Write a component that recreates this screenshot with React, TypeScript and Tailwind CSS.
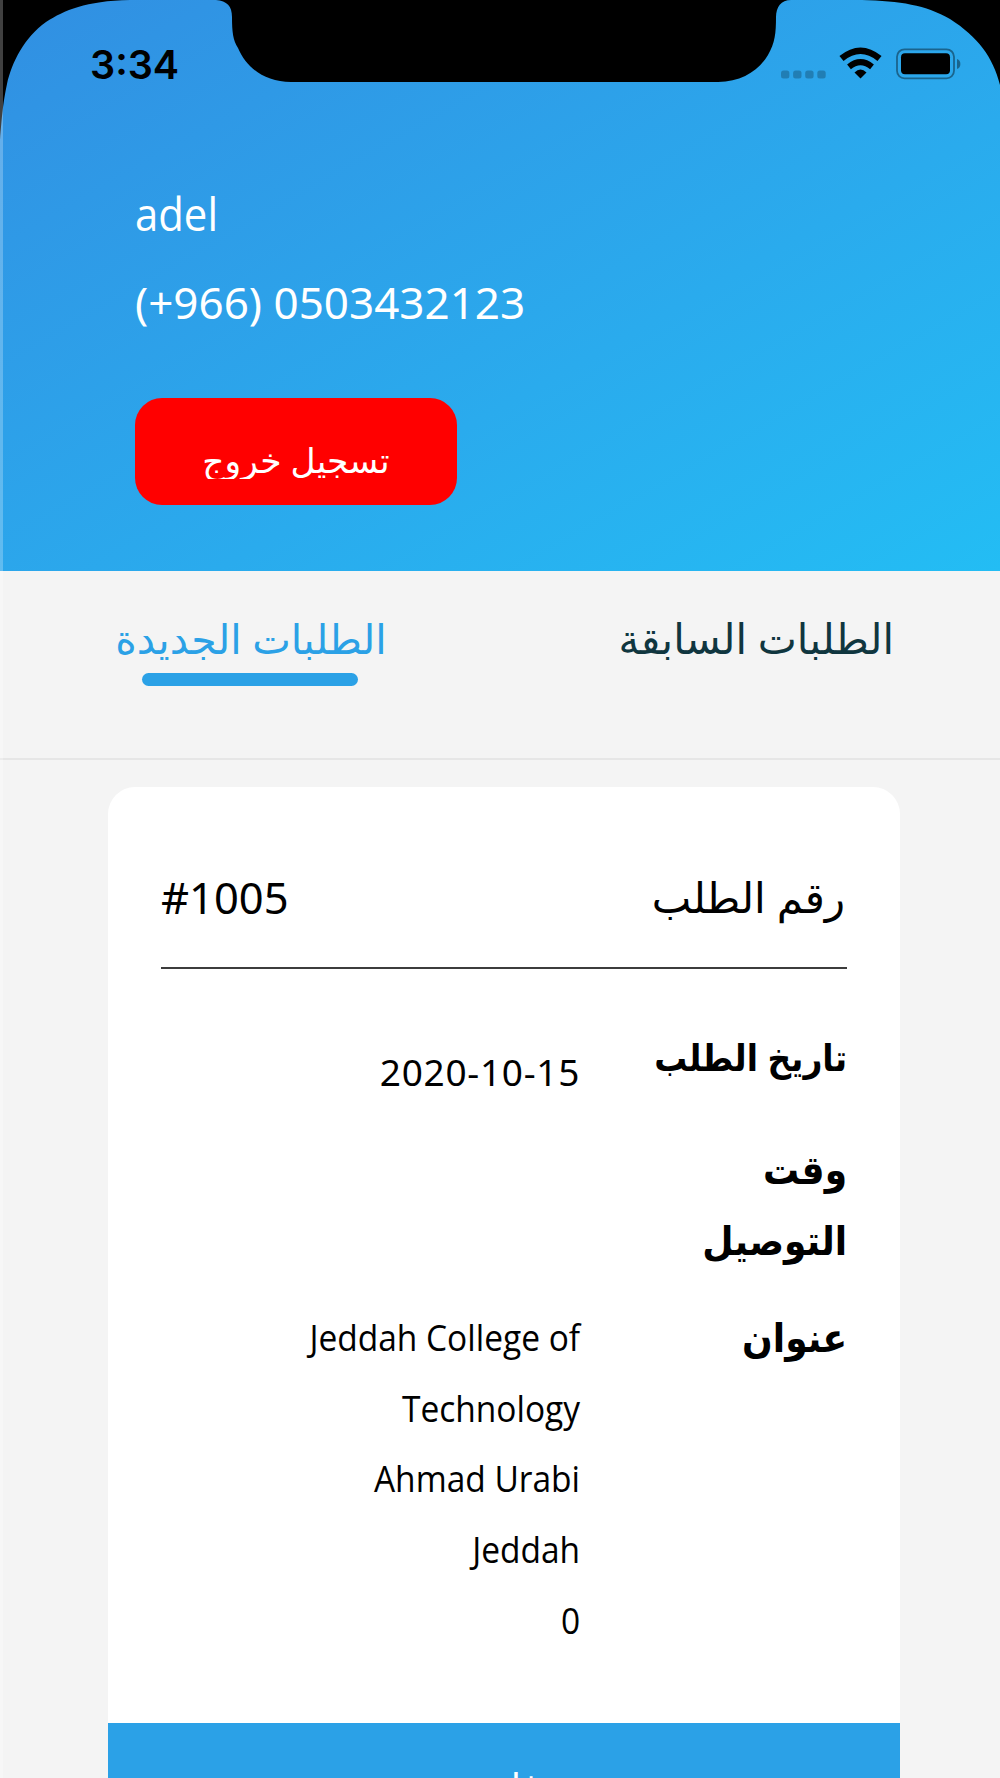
const order = {
  number: "#1005",
  date: "2020-10-15",
  address: ["Jeddah College of", "Technology", "Ahmad Urabi", "Jeddah", "0"],
};

export default function App() {
  return (
    <div className="relative flex h-[1778px] w-[1000px] flex-col overflow-hidden bg-[#f4f4f4] font-['Noto_Sans','DejaVu_Sans',sans-serif]">
      <Header />
      <Tabs />
      <OrderCard />
      {/* light seam along the left edge of the screen */}
      <div className="absolute left-0 top-0 h-full w-[3px] bg-white/25" />
    </div>
  );
}

// Blue profile header with the status bar on top
function Header() {
  return (
    <header className="relative h-[571px] shrink-0 bg-linear-to-br from-[#318fe2] to-[#23bdf4]">
      <Notch />
      <StatusBar />
      <div className="flex flex-col items-start pl-[135px] pt-[40px] text-white">
        <p className="origin-left scale-x-91 font-['Open_Sans'] text-[46px] leading-[88px]">adel</p>
        <p className="pt-px text-[44px] leading-[88px]">(+966) 0503432123</p>
        <button className="mt-[52px] flex h-[107px] w-[322px] justify-center rounded-[27px] bg-[#ff0000] pt-[43px]">
          <span dir="rtl" className="h-[38px] overflow-hidden text-[34.5px] leading-[37px]">
            تسجيل خروج
          </span>
        </button>
      </div>
    </header>
  );
}

// Black phone bezel: rounded corners and the sensor notch
function Notch() {
  return (
    <svg className="absolute left-0 top-0" width="1000" height="140" viewBox="0 0 1000 140">
      <path d="M0 0H130C85 1 65 10 46 22C24 38 12 62 7 84C3 103 2 115 0 140Z" />
      <path d="M216 0C227 1 232 6 232 17C232 32 233 40 238 48C246 67 264 82 291 82H718C742 82 759 70 768 55C775 43 776 33 776 17C776 7 781 0 791 0Z" />
      <path d="M862 0C900 1 926 5 950 19C978 37 993 57 1000 85V0Z" />
    </svg>
  );
}

function StatusBar() {
  return (
    <div className="relative flex h-[129px] items-center justify-between pl-[90px] pr-[38px]">
      <span className="pt-0.5 font-['Inter'] text-[39.5px] font-semibold leading-none">3:34</span>
      <svg width="182" height="37" viewBox="780 46 182 37">
        {[781, 793.1, 805.2, 817.3].map((x) => (
          <rect key={x} x={x} y="70.5" width="8.4" height="8" rx="2.5" fillOpacity="0.23" />
        ))}
        <path d="M841.5 58.5Q860.5 43 879.5 58.5" fill="none" stroke="#000" strokeWidth="6.5" />
        <path d="M849 66.8Q860.5 57.5 872 66.8" fill="none" stroke="#000" strokeWidth="6" />
        <path d="M860.5 78.5L854.5 72.5Q860.5 66.5 866.5 72.5Z" />
        <rect x="897" y="49.3" width="57" height="29" rx="7.5" fill="none" stroke="#000" strokeOpacity="0.4" strokeWidth="1.8" />
        <rect x="901" y="53.3" width="49" height="21" rx="4" />
        <path d="M957 59C961.5 60 961.5 68 957 69Z" fillOpacity="0.4" />
      </svg>
    </div>
  );
}

function Tabs() {
  return (
    <nav className="grid h-[189px] shrink-0 grid-cols-2 border-b-2 border-[#e6e6e6] pt-[37px] text-[41px] leading-[60px]">
      <div className="flex flex-col items-center text-[#2ba1e6]">
        <span dir="rtl" className="pl-0.5">الطلبات الجديدة</span>
        <div className="mt-[5px] h-[13px] w-[216px] rounded-full bg-[#2ba1e6]" />
      </div>
      <div dir="rtl" className="pr-[106px] text-[41.5px] text-[#10363f]">الطلبات السابقة</div>
    </nav>
  );
}

function OrderCard() {
  return (
    <main className="mx-[108px] mt-[27px] flex h-[1100px] w-[792px] shrink-0 flex-col rounded-t-[27px] bg-white text-black">
      <div className="mx-[53px] mt-[80px] flex justify-between border-b-2 border-[#3c3c3c] pb-[40px] text-[43.5px] leading-[60px]">
        <span>{order.number}</span>
        <span dir="rtl" className="pr-0.5 text-[42px]">رقم الطلب</span>
      </div>

      <dl dir="rtl" className="mx-[53px] h-[754px] pt-[53px] text-[37px] leading-[70.7px]">
        <div className="flex h-[112px]">
          <Label className="w-[267px] text-[36.5px]">تاريخ الطلب</Label>
          <dd className="pt-[15px] tracking-[0.7px]">{order.date}</dd>
        </div>
        <div className="flex h-[168px]">
          <Label className="w-[150px] text-[40px]">وقت التوصيل</Label>
        </div>
        <div className="flex">
          <Label className="w-[267px] text-[40px]">عنوان</Label>
          <dd className="origin-right scale-x-[0.905] font-['Open_Sans']">
            {order.address.map((line) => (
              <p key={line}>{line}</p>
            ))}
          </dd>
        </div>
      </dl>

      <footer dir="rtl" className="h-[140px] bg-[#2ba1e7] pr-[24px] pt-[28px] text-center text-[37px] leading-[70px] text-white">
        فاتورة
      </footer>
    </main>
  );
}

function Label({ className, children }: { className: string; children: string }) {
  return (
    <dt className={`${className} font-['Noto_Sans','DejaVu_Sans_Condensed',sans-serif] font-bold`}>
      {children}
    </dt>
  );
}
